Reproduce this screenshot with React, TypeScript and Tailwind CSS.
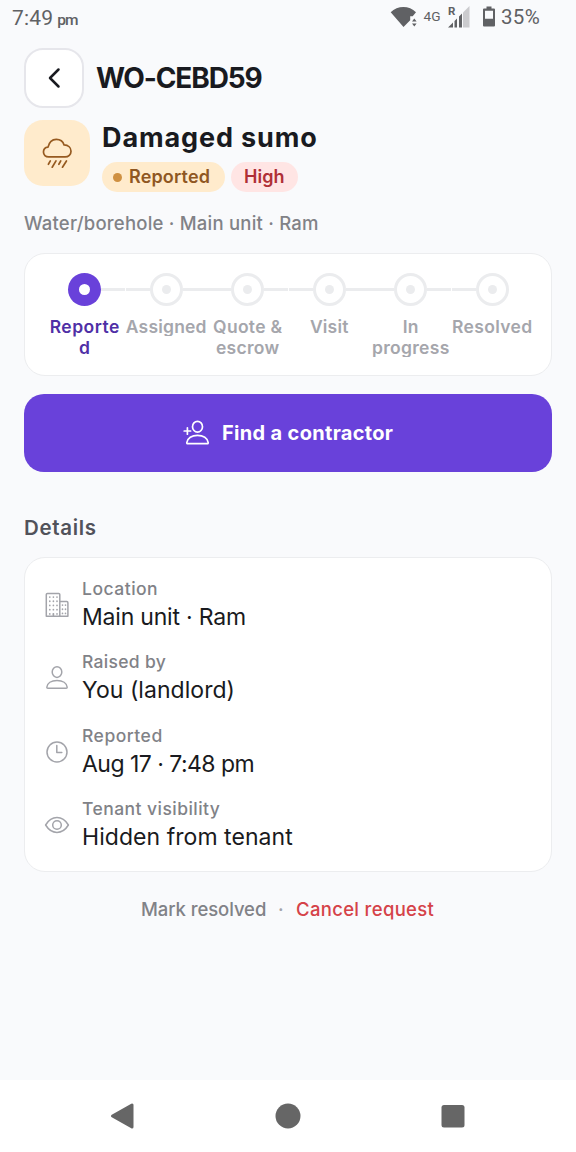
import type { ReactNode } from 'react';

// --- data ---
const steps = [
  { lines: ['Reporte', 'd'], track: 'tracking-[0.5px]', active: true },
  { lines: ['Assigned'], track: 'tracking-[0.2px]' },
  { lines: ['Quote &', 'escrow'], track: 'tracking-[0.3px]' },
  { lines: ['Visit'], track: 'tracking-[0.2px]' },
  { lines: ['In', 'progress'], track: 'tracking-[0.3px]' },
  { lines: ['Resolved'], track: 'tracking-[0.35px]' },
];

// small gaps where two halves of a connector meet
const seams = [true, false, true, false, true, false];

const details = [
  { icon: <BuildingIcon />, label: 'Location', value: 'Main unit · Ram', lt: 'tracking-[0.5px]', vt: 'tracking-[-0.2px]' },
  { icon: <PersonIcon />, label: 'Raised by', value: 'You (landlord)', lt: 'tracking-[0.3px]', vt: 'tracking-[0.05px]' },
  { icon: <ClockIcon />, label: 'Reported', value: 'Aug 17 · 7:48 pm', lt: 'tracking-[0.5px]', vt: 'tracking-[-0.53px]' },
  { icon: <EyeIcon />, label: 'Tenant visibility', value: 'Hidden from tenant', lt: 'tracking-[0.45px]', vt: 'tracking-[0.05px]' },
];

// --- icons ---
function Icon({ children, size = 26, width = 1.5 }: { children: ReactNode; size?: number; width?: number }) {
  return (
    <svg width={size} height={size} viewBox={`0 0 ${size} ${size}`} fill="none" stroke="currentColor" strokeWidth={width} strokeLinecap="round" strokeLinejoin="round">
      {children}
    </svg>
  );
}

function BuildingIcon() {
  return (
    <Icon>
      <path d="M2.300 24.300V2.600q0-1.100 1.100-1.100h11.300q1.100 0 1.100 1.100v21.700zM15.800 9.600h7q1.100 0 1.100 1.100v13.600h-8.100" />
      <path d="M5.800 5v17M9.400 5v17M13 5v17M18.500 13v9M21.500 13v9" strokeWidth="1.700" strokeDasharray="0.1 4.1" />
      <path d="M9.400 22v2" />
    </Icon>
  );
}

function PersonIcon() {
  return (
    <Icon>
      <ellipse cx="13" cy="7.100" rx="4.800" ry="5.300" />
      <path d="M3.800 23.300q-1 0-1-1C3.200 18.100 7.300 15.600 13 15.600s9.800 2.500 10.200 6.700q0 1-1 1z" />
    </Icon>
  );
}

function ClockIcon() {
  return (
    <Icon>
      <circle cx="13" cy="13" r="10" />
      <path d="M12.800 6.500v7h5" />
    </Icon>
  );
}

function EyeIcon() {
  return (
    <Icon>
      <path d="M1.600 13C4.300 8.600 8.300 5.600 13 5.600S21.700 8.600 24.400 13C21.700 17.400 17.700 20.400 13 20.400S4.300 17.400 1.600 13z" />
      <circle cx="13" cy="13" r="4.300" />
    </Icon>
  );
}

function AddPersonIcon() {
  return (
    <Icon size={28} width={1.7}>
      <ellipse cx="15.500" cy="7.700" rx="5" ry="5.400" />
      <path d="M5.700 24.700q-1 0-.9-1.100C5.600 19.200 9.800 16.300 15.500 16.300s10 2.900 10.700 7.300q.1 1.100-.9 1.100z" />
      <path d="M2.200 12h6.400M5.400 8.800v6.400" />
    </Icon>
  );
}

function RainIcon() {
  return (
    <Icon size={34} width={1.8}>
      <g transform="translate(.8 .8) scale(.95)">
        <path d="M8.300 21.200C5 21.200 2.800 19 2.800 16.100c0-2.800 2-5 4.800-5.200C8.700 5.900 12 2.600 16.300 2.600c4.200 0 7.200 2.500 8.200 6 4.400.2 7.300 2.900 7.300 6.500 0 3.500-2.700 6.100-6.200 6.100z" />
        <path d="M10 25.400l-2 3.500M16 25.400l-4 6.600M21 25.400l-2 3.500M27 25.400l-4.200 6.600" />
      </g>
    </Icon>
  );
}

function StatusBar() {
  return (
    <div className="flex h-[34px] items-center justify-between pl-3 pr-9 font-[Roboto] text-[#606164]">
      <div className="flex items-baseline pt-[3px]">
        <span className="text-[21px] leading-[34px] tracking-[0.2px]">7:49</span>
        <span className="ml-1 text-[15.500px] leading-[34px] font-medium tracking-[-0.9px]">pm</span>
      </div>
      <div className="flex items-center">
        <svg width="88" height="24" viewBox="0 0 88 24" fill="currentColor">
          <path d="M.7 7.200C7.500.200 19.300.200 26 7.200l-3.300 4h-2.500v4L13.500 22z" />
          <path d="M22 16.500l2.300-3 2.300 3zM22 18.500l2.300 3 2.300-3z" />
          <text x="33.600" y="16" fontFamily="Roboto" fontSize="12.500" fontWeight="400" textLength="17" lengthAdjust="spacingAndGlyphs">4G</text>
          <text x="58" y="9.500" fontFamily="Roboto" fontSize="11.500" fontWeight="700">R</text>
          <path d="M58 22.500l5-5v5zM64.500 16l2.500-2.500v9h-2.500zM69 11.500l3-3v14h-3z" />
          <path d="M73 7.500l6.500-6.500v21.500H73z" opacity=".3" />
        </svg>
        <svg className="-mt-0.5 ml-1" width="14" height="21" viewBox="0 0 14 21" fill="currentColor">
          <path fillRule="evenodd" d="M4.500.5h5v2H12q1 0 1 1v16q0 1-1 1H2q-1 0-1-1v-16q0-1 1-1h2.500zM3 4.800v8h8v-8z" />
        </svg>
        <span className="ml-[5px] text-[20.500px] leading-[34px] tracking-[0.3px]">35%</span>
      </div>
    </div>
  );
}

function Stepper() {
  return (
    <div className="mt-[17px] flex h-[123px] rounded-[21px] border-[1.500px] border-[#ecedef] bg-white pt-[19px] pl-[19px]">
      {steps.map((step, i) => (
        <div key={step.lines[0]} className="flex w-[81.500px] shrink-0 flex-col items-center">
          <div className="flex h-[33px] w-full items-center">
            <div className={i === 0 ? 'h-[3px] flex-1' : 'h-[3px] flex-1 bg-[#ebecee]'} />
            {step.active ? (
              <div className="flex size-[33px] items-center justify-center rounded-full bg-[#6941da]">
                <div className="size-[11px] rounded-full bg-white" />
              </div>
            ) : (
              <div className="flex size-[33px] items-center justify-center rounded-full border-[3px] border-[#ebecee]">
                <div className="size-[9px] rounded-full bg-[#ebecee]" />
              </div>
            )}
            <div className={i === 5 ? 'h-[3px] flex-1' : 'h-[3px] flex-1 bg-[#ebecee]'} />
            {seams[i] && <div className="-ml-px h-[3px] w-px bg-white" />}
          </div>
          <div
            className={`mt-[10px] overflow-hidden text-center text-[17.500px] leading-[21px] font-semibold whitespace-nowrap ${step.track} ${
              step.lines.length > 1 ? 'h-[41px]' : 'h-[20px]'
            } ${step.active ? 'text-[#4f2fa6]' : 'text-[#a5a6ac]'}`}
          >
            {step.lines.map((line) => (
              <div key={line}>{line}</div>
            ))}
          </div>
        </div>
      ))}
    </div>
  );
}

function App() {
  return (
    <div className="flex h-[1152px] w-[576px] flex-col overflow-hidden bg-[#f9fafc] font-['Inter',sans-serif] text-[#191a20]">
      <StatusBar />

      <main className="flex flex-1 flex-col px-6">
        <header className="mt-[14px] flex items-center">
          <button type="button" className="flex size-[60px] items-center justify-center rounded-[19px] border-2 border-[#e6e6eb] bg-white">
            <svg width="14" height="22" viewBox="0 0 14 22" fill="none" stroke="currentColor" strokeWidth="2.500" strokeLinecap="round" strokeLinejoin="round">
              <path d="M11.500 2.500L3 11l8.500 8.500" />
            </svg>
          </button>
          <h1 className="ml-3 text-[28px] leading-[36px] font-bold whitespace-nowrap tracking-[-1.1px]">WO-CEBD59</h1>
        </header>

        <section className="mt-3 flex h-[72px]">
          <div className="flex size-[66px] items-center justify-center rounded-[19px] bg-[#ffebcc] text-[#965a20]">
            <RainIcon />
          </div>
          <div className="ml-3">
            <h2 className="h-[42px] text-[27px] leading-[35px] font-bold whitespace-nowrap tracking-[0.88px]">Damaged sumo</h2>
            <div className="flex gap-1.5 text-[18px] leading-[22px] font-semibold whitespace-nowrap">
              <div className="flex h-[30px] w-[123px] items-center rounded-full bg-[#ffebcc] pl-[11px] text-[#8f5722]">
                <span className="mr-[7px] size-[9px] rounded-full bg-[#cf9041]" />
                <span className="tracking-[0.15px]">Reported</span>
              </div>
              <div className="flex h-[30px] w-[67px] items-start rounded-full bg-[#ffe5e4] pt-1 pl-[13px] text-[#b02f36]">
                <span className="h-[21px] overflow-hidden">High</span>
              </div>
            </div>
          </div>
        </section>

        <p className="mt-[18px] text-[18.500px] leading-[26px] font-medium whitespace-nowrap tracking-[0.22px] text-[#818287]">
          Water/borehole · Main unit · Ram
        </p>

        <Stepper />

        <button type="button" className="mt-[18px] flex h-[78px] shrink-0 items-center rounded-[20px] bg-[#6941da] pl-[158px] text-white">
          <AddPersonIcon />
          <span className="ml-3 text-[20px] leading-[28px] font-bold whitespace-nowrap tracking-[0.32px]">Find a contractor</span>
        </button>

        <h3 className="mt-[42px] text-[20.500px] leading-[28px] font-semibold tracking-[0.65px] text-[#51525a]">Details</h3>

        <div className="mt-[15px] flex h-[315px] shrink-0 flex-col rounded-[21px] border-[1.500px] border-[#ecedef] bg-white pt-[18px] pl-[19px]">
          {details.map((row) => (
            <div key={row.label} className="flex h-[73.400px] items-start">
              <div className="mt-4 text-[#a3a4aa]">{row.icon}</div>
              <div className="ml-3 whitespace-nowrap">
                <div className={`text-[17.500px] leading-[26px] font-medium text-[#818287] ${row.lt}`}>{row.label}</div>
                <div className={`text-[23px] leading-[30px] ${row.vt}`}>{row.value}</div>
              </div>
            </div>
          ))}
        </div>

        <div className="mt-[24px] flex items-center pl-[117px] text-[18.500px] leading-[26px] font-medium whitespace-nowrap">
          <span className="w-[137px] tracking-[-0.08px] text-[#818287]">Mark resolved</span>
          <span className="w-[18px] text-[#a3a4aa]">·</span>
          <span className="tracking-[0.32px] text-[#d54248]">Cancel request</span>
        </div>
      </main>

      <nav className="h-[72px] shrink-0 bg-white text-[#666]">
        <svg width="576" height="72" viewBox="0 0 576 72" fill="currentColor" stroke="currentColor" strokeLinejoin="round">
          <path d="M112.500 36L132 25v22z" strokeWidth="3" />
          <circle cx="288" cy="36" r="12.500" stroke="none" />
          <rect x="441.500" y="25" width="23" height="22.500" rx="2.500" stroke="none" />
        </svg>
      </nav>
    </div>
  );
}

export default App;
